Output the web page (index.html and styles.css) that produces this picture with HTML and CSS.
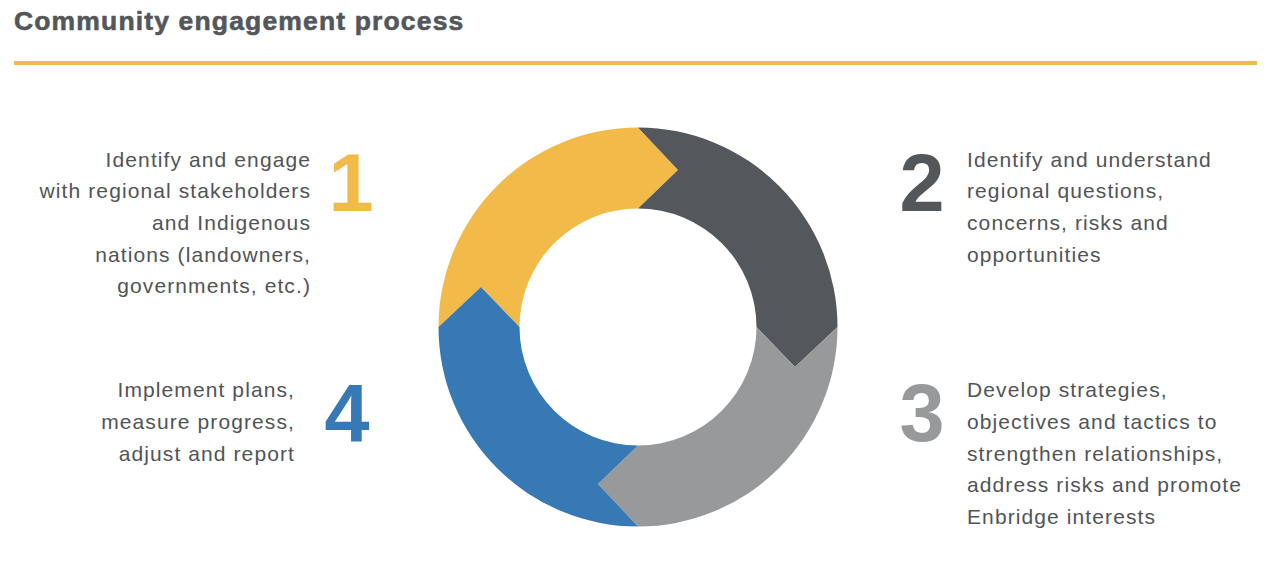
FILE: index.html
```html
<!DOCTYPE html>
<html lang="en">
<head>
<meta charset="utf-8">
<title>Community engagement process</title>
<link rel="stylesheet" href="styles.css">
</head>
<body>
<header class="head">
  <h1 class="title">Community engagement process</h1>
  <div class="rule"></div>
</header>
<main class="diagram">
  <div class="col col-left">
    <div class="step step-1">
      <p class="desc">Identify and engage<br>with regional stakeholders<br>and Indigenous<br>nations (landowners,<br>governments, etc.)</p>
      <span class="num num-1">1</span>
    </div>
    <div class="step step-4">
      <p class="desc">Implement plans,<br>measure progress,<br>adjust and report</p>
      <span class="num num-4">4</span>
    </div>
  </div>
  <svg class="donut" viewBox="0 0 400 400" width="400" height="400" aria-hidden="true">
    <path class="seg seg-yellow" d="M0.5 200 A199.5 199.5 0 0 1 200 0.5 L240 43 L200 81.5 A118.5 118.5 0 0 0 81.5 200 L43 160 Z"/>
    <path class="seg seg-dark" d="M200 0.5 A199.5 199.5 0 0 1 399.5 200 L357 240 L318.5 200 A118.5 118.5 0 0 0 200 81.5 L240 43 Z"/>
    <path class="seg seg-light" d="M399.5 200 A199.5 199.5 0 0 1 200 399.5 L160 357 L200 318.5 A118.5 118.5 0 0 0 318.5 200 L357 240 Z"/>
    <path class="seg seg-blue" d="M200 399.5 A199.5 199.5 0 0 1 0.5 200 L43 160 L81.5 200 A118.5 118.5 0 0 0 200 318.5 L160 357 Z"/>
  </svg>
  <div class="col col-right">
    <div class="step step-2">
      <span class="num num-2">2</span>
      <p class="desc">Identify and understand<br>regional questions,<br>concerns, risks and<br>opportunities</p>
    </div>
    <div class="step step-3">
      <span class="num num-3">3</span>
      <p class="desc">Develop strategies,<br>objectives and tactics to<br>strengthen relationships,<br>address risks and promote<br>Enbridge interests</p>
    </div>
  </div>
</main>
</body>
</html>
```
FILE: styles.css
```css
html, body {
  margin: 0;
  padding: 0;
  background: #ffffff;
}

body {
  font-family: "Liberation Sans", Arial, Helvetica, sans-serif;
  color: #54575a;
  width: 1280px;
  height: 565px;
  overflow: hidden;
}

.head {
  padding: 8px 23px 0 14px;
}

.title {
  margin: 0;
  font-size: 26.5px;
  line-height: 26.5px;
  font-weight: 700;
  letter-spacing: 1.15px;
  -webkit-text-stroke: 0.6px #54575a;
  color: #54575a;
}

.rule {
  margin-top: 26px;
  height: 4px;
  background: #f2ba48;
}

.diagram {
  display: flex;
  align-items: flex-start;
  padding-top: 62px;
}

.col {
  display: grid;
  grid-template-rows: 230.8px auto;
  padding-top: 17px;
}

.col-left {
  width: 438px;
  flex: none;
}

.col-right {
  flex: 1;
}

.donut {
  flex: none;
  display: block;
  width: 400px;
  height: 400px;
}

.seg-yellow { fill: #f2ba48; }
.seg-dark { fill: #54575b; }
.seg-light { fill: #98999b; }
.seg-blue { fill: #3679b5; }

.step {
  display: flex;
  align-items: flex-start;
}

.col-left .step {
  justify-content: flex-end;
  text-align: right;
}

.step-1 {
  gap: 16px;
  padding-right: 63px;
}

.step-4 {
  gap: 28px;
  padding-right: 67px;
}

.col-right .step {
  gap: 21px;
  padding-left: 60px;
}

.desc {
  margin: 0;
  font-size: 21px;
  line-height: 31.7px;
  letter-spacing: 1.1px;
  white-space: nowrap;
  color: #515457;
}

.num {
  display: block;
  width: 48px;
  margin-top: -1px;
  text-align: center;
  font-size: 81px;
  line-height: 81px;
  font-weight: 700;
}

.num-1 { color: #f2ba48; }
.num-2 { color: #54575a; }
.num-3 { color: #98999b; }
.num-4 { color: #3679b5; }
```
